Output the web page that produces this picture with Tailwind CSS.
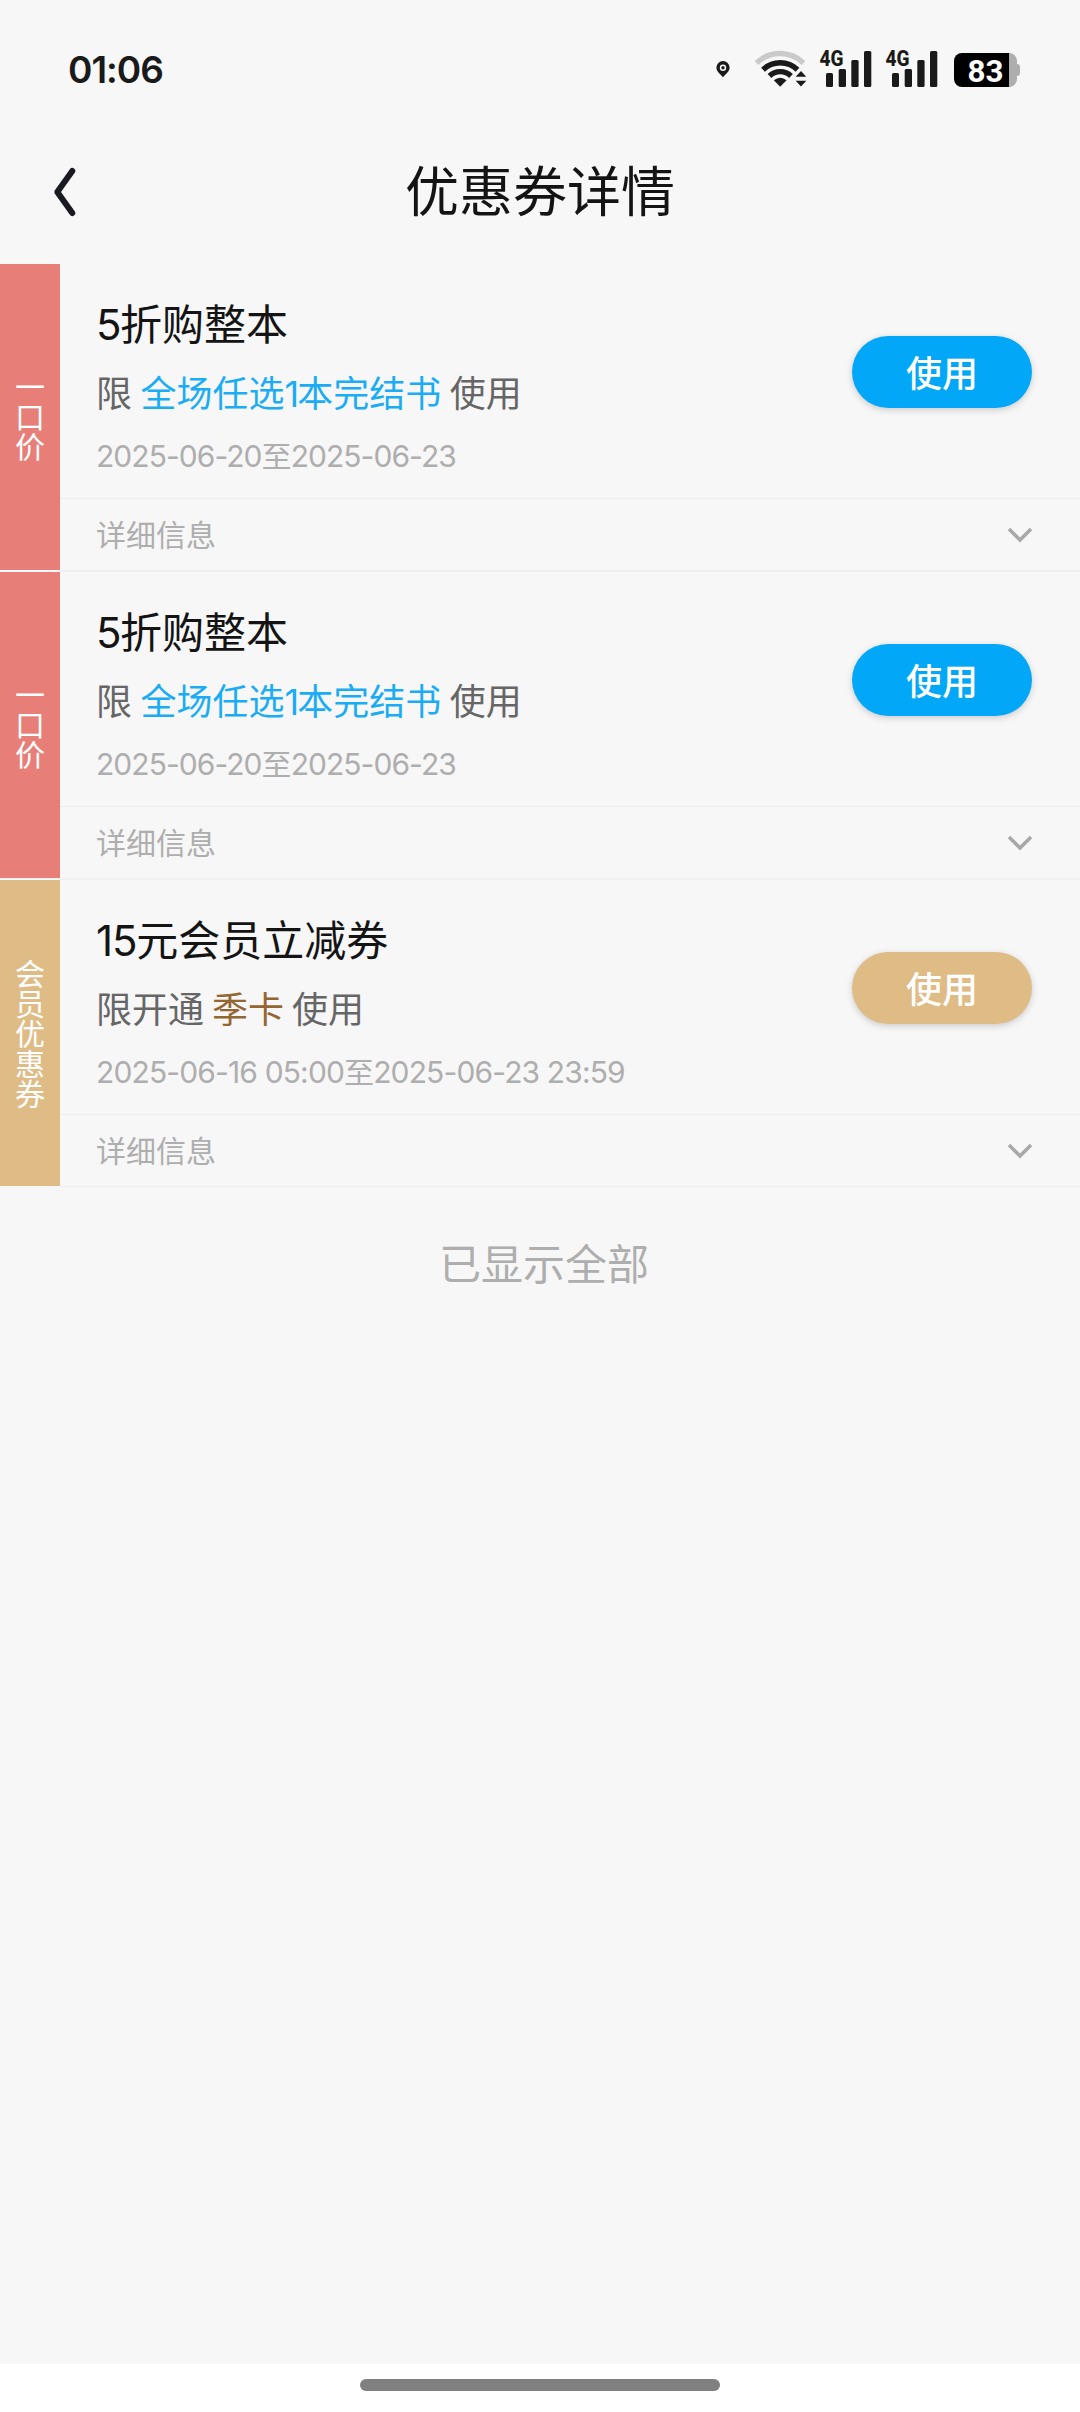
<!DOCTYPE html>
<html lang="zh-CN">
<head>
<meta charset="utf-8">
<title>优惠券详情</title>
<script src="https://cdn.jsdelivr.net/npm/@tailwindcss/browser@4"></script>
</head>
<body class="bg-[#f7f7f7]">
<div class="flex h-[2412px] w-[1080px] flex-col overflow-hidden bg-[#f7f7f7] font-['Inter','Noto_Sans_CJK_SC',sans-serif] text-[#141414]">
  <!-- status bar -->
  <div class="flex h-[138px] shrink-0 items-center justify-between pl-[68px] pr-[60px]">
    <div class="text-[37px] leading-none font-semibold tracking-[-1px] text-[#1a1a1a]">01:06</div>
    <svg class="h-[60px] w-[320px]" viewBox="700 40 320 60" fill="#1a1a1a">
      <path fill-rule="evenodd" d="M723 62a6.600 6.600 0 0 1 6.600 6.600c0 4-3.600 6.400-6.600 9.600-3-3.200-6.600-5.600-6.600-9.600A6.600 6.600 0 0 1 723 62zm0 3.600a3.200 3.200 0 1 0 0 6.400 3.200 3.200 0 0 0 0-6.400z"/>
      <circle cx="723" cy="68.800" r="1.700"/>
      <g fill="none" stroke-width="5.400">
        <path stroke="#cacaca" d="M756.500 64a34 34 0 0 1 47 0"/>
        <path stroke="#1a1a1a" d="M763 70.700a25 25 0 0 1 34.500 0"/>
        <path stroke="#1a1a1a" d="M769.500 77a15.500 15.500 0 0 1 21.500 0"/>
      </g>
      <path d="M773.800 81.300q6.400-5.200 12.800 0l-6.400 6.400z"/>
      <path d="M801 72l5.300 5.800h-10.600zM801 87.500l-5.300-5.800h10.600z"/>
      <g>
        <rect x="826" y="74" width="7" height="14" rx="1.500"/><rect x="838.700" y="70" width="7.300" height="18" rx="1.500"/><rect x="851.300" y="61" width="7.300" height="27" rx="1.500"/><rect x="864" y="52" width="7.300" height="36" rx="1.500"/>
        <text x="819.500" y="67" font-family="Roboto" font-weight="800" font-size="22.500" textLength="24" lengthAdjust="spacingAndGlyphs">4G</text>
      </g>
      <g transform="translate(66 0)">
        <rect x="826" y="74" width="7" height="14" rx="1.500"/><rect x="838.700" y="70" width="7.300" height="18" rx="1.500"/><rect x="851.300" y="61" width="7.300" height="27" rx="1.500"/><rect x="864" y="52" width="7.300" height="36" rx="1.500"/>
        <text x="819.500" y="67" font-family="Roboto" font-weight="800" font-size="22.500" textLength="24" lengthAdjust="spacingAndGlyphs">4G</text>
      </g>
      <path fill="#aeaeae" d="M1009 54h0a8 8 0 0 1 8 8v3q3 0 3 3v6q0 3-3 3v3a8 8 0 0 1-8 8z"/>
      <path fill="#000" d="M1009 54h-47a8 8 0 0 0-8 8v18a8 8 0 0 0 8 8h47z"/>
      <text x="967.500" y="83" fill="#fff" font-family="Roboto" font-weight="700" font-size="31" textLength="36" lengthAdjust="spacingAndGlyphs">83</text>
    </svg>
  </div>
  <!-- title bar -->
  <div class="grid h-[126px] shrink-0 grid-cols-[120px_1fr_120px] pb-[18px]">
    <svg class="h-[108px] w-[120px]" viewBox="0 138 120 108"><path d="M72.300 171L57.300 192l15 21" fill="none" stroke="#1a1a22" stroke-width="6" stroke-linecap="round" stroke-linejoin="round"/></svg>
    <h1 class="text-center text-[54px] leading-[110px]">优惠券详情</h1>
  </div>
  <!-- coupons -->
  <div class="flex h-[308px] shrink-0">
    <div class="flex h-[306px] w-[60px] items-center justify-center bg-[#e87e78] text-[30px] text-white"><span class="w-[30px] text-center leading-[30px]">一口价</span></div>
    <div class="flex flex-1 flex-col border-b-2 border-[#efefef]">
      <div class="flex h-[234px] justify-between pl-9 pr-12">
        <div class="pt-[33px] whitespace-nowrap">
          <div class="h-[66px] text-[42px] leading-[56px]"><span class="tracking-[-1.5px]">5</span>折购整本</div>
          <div class="h-[63px] text-[36px] leading-[62px] text-[#666]">限<span class="mx-[8.500px] text-[#1aacf5]">全场任选<span class="tracking-[-2px]">1</span>本完结书</span>使用</div>
          <div class="text-[30px] leading-[60px] tracking-[-0.95px] text-[#aeaeae]">2025-06-20至2025-06-23</div>
        </div>
        <button class="mt-[72px] h-[72px] w-[180px] rounded-full bg-[#02a8f7] pt-[4px] text-[36px] leading-[68px] font-medium text-white shadow-[0_2px_7px_rgba(0,0,0,0.18)]">使用</button>
      </div>
      <div class="flex flex-1 items-center justify-between border-t border-[#eee] pl-9 pr-12 text-[30px] leading-none text-[#aeaeae]">
        <span>详细信息</span>
        <svg class="h-4 w-6" viewBox="0 0 24 16"><path d="M1 2l11 11L23 2" fill="none" stroke="#a8a8a8" stroke-width="3.500"/></svg>
      </div>
    </div>
  </div>
  <div class="flex h-[308px] shrink-0">
    <div class="flex h-[306px] w-[60px] items-center justify-center bg-[#e87e78] text-[30px] text-white"><span class="w-[30px] text-center leading-[30px]">一口价</span></div>
    <div class="flex flex-1 flex-col border-b-2 border-[#efefef]">
      <div class="flex h-[234px] justify-between pl-9 pr-12">
        <div class="pt-[33px] whitespace-nowrap">
          <div class="h-[66px] text-[42px] leading-[56px]"><span class="tracking-[-1.5px]">5</span>折购整本</div>
          <div class="h-[63px] text-[36px] leading-[62px] text-[#666]">限<span class="mx-[8.500px] text-[#1aacf5]">全场任选<span class="tracking-[-2px]">1</span>本完结书</span>使用</div>
          <div class="text-[30px] leading-[60px] tracking-[-0.95px] text-[#aeaeae]">2025-06-20至2025-06-23</div>
        </div>
        <button class="mt-[72px] h-[72px] w-[180px] rounded-full bg-[#02a8f7] pt-[4px] text-[36px] leading-[68px] font-medium text-white shadow-[0_2px_7px_rgba(0,0,0,0.18)]">使用</button>
      </div>
      <div class="flex flex-1 items-center justify-between border-t border-[#eee] pl-9 pr-12 text-[30px] leading-none text-[#aeaeae]">
        <span>详细信息</span>
        <svg class="h-4 w-6" viewBox="0 0 24 16"><path d="M1 2l11 11L23 2" fill="none" stroke="#a8a8a8" stroke-width="3.500"/></svg>
      </div>
    </div>
  </div>
  <div class="flex h-[307px] shrink-0">
    <div class="flex h-[306px] w-[60px] items-center justify-center bg-[#dfbc86] pt-0.5 text-[30px] text-white"><span class="w-[30px] text-center leading-[30px]">会员优惠券</span></div>
    <div class="flex flex-1 flex-col border-b border-[#eee]">
      <div class="flex h-[234px] justify-between pl-9 pr-12">
        <div class="pt-[33px] whitespace-nowrap">
          <div class="h-[66px] text-[42px] leading-[56px]"><span class="tracking-[-1.2px]">15</span>元会员立减券</div>
          <div class="h-[63px] text-[36px] leading-[62px] text-[#666]">限开通<span class="mx-[8px] text-[#946632]">季卡</span>使用</div>
          <div class="text-[30px] leading-[60px] tracking-[-0.86px] text-[#aeaeae]">2025-06-16 05:00至2025-06-23 23:59</div>
        </div>
        <button class="mt-[72px] h-[72px] w-[180px] rounded-full bg-[#dfbc86] pt-[4px] text-[36px] leading-[68px] font-medium text-white shadow-[0_2px_7px_rgba(0,0,0,0.18)]">使用</button>
      </div>
      <div class="flex flex-1 items-center justify-between border-t border-[#eee] pl-9 pr-12 text-[30px] leading-none text-[#aeaeae]">
        <span>详细信息</span>
        <svg class="h-4 w-6" viewBox="0 0 24 16"><path d="M1 2l11 11L23 2" fill="none" stroke="#a8a8a8" stroke-width="3.500"/></svg>
      </div>
    </div>
  </div>
  <div class="pt-12 pl-2 text-center text-[42px] leading-[60px] text-[#aeaeae]">已显示全部</div>
  <!-- gesture bar -->
  <div class="mt-auto flex h-12 shrink-0 justify-center bg-white pt-[15px]"><div class="h-3 w-[360px] rounded-full bg-[#808080]"></div></div>
</div>
</body>
</html>
